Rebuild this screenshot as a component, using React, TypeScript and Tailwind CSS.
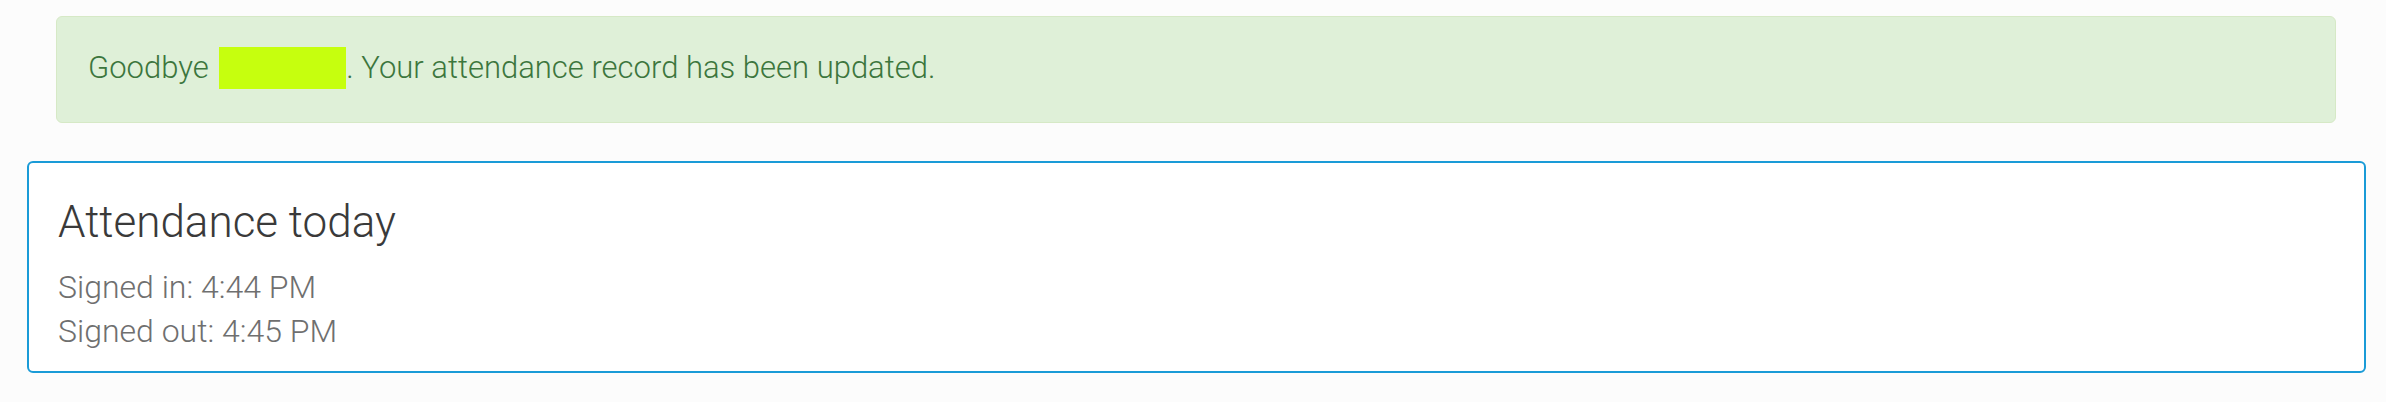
export default function App() {
  return (
    <div className="min-h-screen w-full bg-[#fcfcfc] pt-[16px] pb-[29px]" style={{ fontFamily: 'Roboto, "Liberation Sans", sans-serif' }}>
      <div className="ml-[56px] mr-[50px] h-[107px] rounded-[6px] border border-[#d6e9c6] bg-[#dff0d8] flex items-center pl-[31px]">
        <p className="text-[31px] font-light text-[#3c763d] leading-none">
          Goodbye <span className="inline-block ml-[3px] w-[127px] h-[42px] bg-[#c6ff0e] align-middle -mt-[4px]"></span>. Your attendance record has been updated.
        </p>
      </div>
      <div className="mt-[38px] ml-[27px] mr-[20px] h-[212px] rounded-[6px] border-2 border-[#1a9bd7] bg-white pl-[29px] pt-[37px]">
        <h2 className="text-[44px] font-light text-[#3a3a3a] leading-none">Attendance today</h2>
        <div className="mt-[21px] text-[32px] font-light text-[#6f6f6f] leading-[44px]">
          <div>Signed in: 4:44 PM</div>
          <div>Signed out: 4:45 PM</div>
        </div>
      </div>
    </div>
  );
}
